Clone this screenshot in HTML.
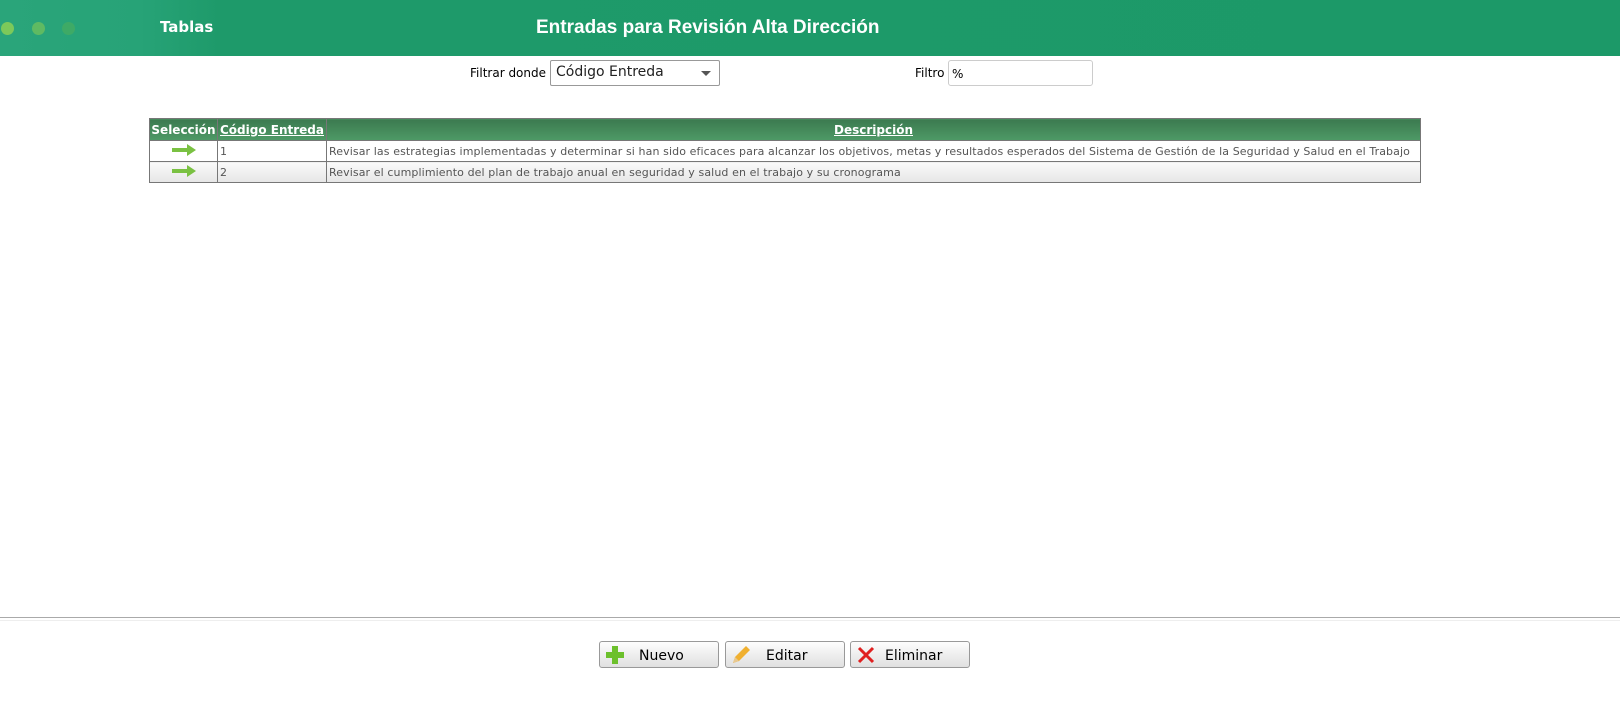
<!DOCTYPE html>
<html><head><meta charset="utf-8"><style>
body{margin:0;width:1620px;height:703px;background:#fff;font-family:"DejaVu Sans","Liberation Sans",sans-serif;position:relative;overflow:hidden}
.hdr{position:absolute;left:0;top:0;width:1620px;height:56px;background:linear-gradient(90deg,#2aa57a 0,#27a377 140px,#1e9a6a 220px,#1c9968 100%)}
.dot{position:absolute;top:22px;width:13px;height:13px;border-radius:50%}
.t1{position:absolute;left:160px;top:18px;color:#fff;font:bold 15px "DejaVu Sans",sans-serif}
.t2{position:absolute;left:536px;top:17px;color:#fff;font:bold 19px "Liberation Sans",sans-serif}
.lbl{position:absolute;font-size:12px;color:#000}
.sel{position:absolute;left:550px;top:60px;width:170px;height:26px;border:1px solid #999;border-radius:2px;box-sizing:border-box;font-size:14px;padding:3px 5px;color:#222}
.sel:after{content:"";position:absolute;right:8px;top:10px;border:5px solid transparent;border-top:5px solid #555}
.inp{position:absolute;left:948px;top:60px;width:145px;height:26px;border:1px solid #ccc;border-radius:3px;box-sizing:border-box;font-size:12px;padding:6px 3px}
table{position:absolute;left:149px;top:118px;border-collapse:collapse;width:1272px;table-layout:fixed}
td,th{border:1px solid #777;font-size:11px;height:20px;padding:0 2px;white-space:nowrap;overflow:hidden}
th{background:linear-gradient(#3c7a50,#4e9a66);color:#fff;font-weight:bold;height:21px;font-size:12px;padding:0 1px}
th a{color:#fff;text-decoration:underline}
td{color:#555;letter-spacing:.1px}
tr.r2 td{background:linear-gradient(#fafafa,#e6e6e6)}
.line{position:absolute;left:0;top:617px;width:1620px;height:1px;background:#aaa}
.line2{position:absolute;left:0;top:620px;width:1620px;height:1px;background:#eee}
.btn{position:absolute;top:641px;width:120px;height:27px;box-sizing:border-box;border:1px solid #999;border-radius:3px;background:linear-gradient(#fdfdfd,#e0e0e0);font:14px "DejaVu Sans",sans-serif;color:#000}
.btn span{position:absolute;top:6px}
</style></head><body>
<div class="hdr">
<div class="dot" style="left:1px;background:#7cc95a"></div>
<div class="dot" style="left:32px;background:#5fba62"></div>
<div class="dot" style="left:62px;background:#3eaa66"></div>
<div class="t1">Tablas</div>
<div class="t2">Entradas para Revisión Alta Dirección</div>
</div>
<div class="lbl" style="left:470px;top:66px">Filtrar donde</div>
<div class="sel">Código Entreda</div>
<div class="lbl" style="left:915px;top:66px">Filtro</div>
<div class="inp">%</div>
<table>
<colgroup><col style="width:68px"><col style="width:109px"><col></colgroup>
<tr><th>Selección</th><th><a>Código Entreda</a></th><th><a>Descripción</a></th></tr>
<tr><td style="text-align:center"><svg width="26" height="12"><path d="M1 4h15V0l9 6-9 6V8H1z" fill="#7ac142"/></svg></td><td>1</td><td>Revisar las estrategias implementadas y determinar si han sido eficaces para alcanzar los objetivos, metas y resultados esperados del Sistema de Gestión de la Seguridad y Salud en el Trabajo</td></tr>
<tr class="r2"><td style="text-align:center"><svg width="26" height="12"><path d="M1 4h15V0l9 6-9 6V8H1z" fill="#7ac142"/></svg></td><td>2</td><td>Revisar el cumplimiento del plan de trabajo anual en seguridad y salud en el trabajo y su cronograma</td></tr>
</table>
<div class="line"></div><div class="line2"></div>
<div class="btn" style="left:599px"><svg style="position:absolute;left:5px;top:3px" width="20" height="20"><path d="M7 1h6v6h6v6h-6v6H7v-6H1V7h6z" fill="#6cc02c"/></svg><span style="left:39px">Nuevo</span></div>
<div class="btn" style="left:725px"><svg style="position:absolute;left:5px;top:3px" width="20" height="20"><path d="M2 18l2-6L15 1l4 4L8 16z" fill="#f0b030"/><path d="M2 18l2-6 4 4z" fill="#e8c890"/></svg><span style="left:40px">Editar</span></div>
<div class="btn" style="left:850px"><svg style="position:absolute;left:6px;top:4px" width="18" height="18"><path d="M2 2l14 14M16 2L2 16" stroke="#e02020" stroke-width="3"/></svg><span style="left:34px">Eliminar</span></div>
</body></html>
